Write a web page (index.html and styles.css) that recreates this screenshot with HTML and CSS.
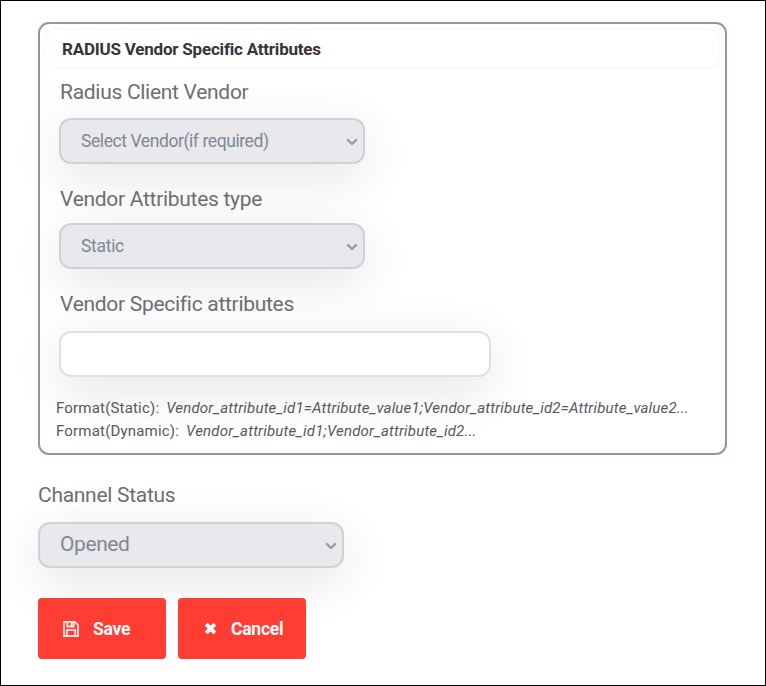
FILE: index.html
```html
<!DOCTYPE html>
<html lang="en">
<head>
<meta charset="utf-8">
<title>RADIUS Vendor Specific Attributes</title>
<link rel="stylesheet" href="styles.css">
</head>
<body>
<form class="page">
  <section class="panel">
    <h2 class="panel-title">RADIUS Vendor Specific Attributes</h2>
    <div class="field">
      <label class="label">Radius Client Vendor</label>
      <div class="control select small"><span class="vendor">Select Vendor(if required)</span>
        <svg class="chevron" viewBox="0 0 12 8"><path d="M1.2 1.4 6 6l4.8-4.6"/></svg></div>
    </div>
    <div class="field type">
      <label class="label">Vendor Attributes type</label>
      <div class="control select small"><span>Static</span>
        <svg class="chevron" viewBox="0 0 12 8"><path d="M1.2 1.4 6 6l4.8-4.6"/></svg></div>
    </div>
    <div class="field attrs">
      <label class="label" for="attributes">Vendor Specific attributes</label>
      <input class="control input" id="attributes" type="text">
    </div>
    <div class="formats">
      <p class="format"><span>Format(Static):</span><em>Vendor_attribute_id1=Attribute_value1;Vendor_attribute_id2=Attribute_value2...</em></p>
      <p class="format"><span>Format(Dynamic):</span><em>Vendor_attribute_id1;Vendor_attribute_id2...</em></p>
    </div>
  </section>
  <div class="status">
    <label class="label">Channel Status</label>
    <div class="control select large"><span>Opened</span>
      <svg class="chevron" viewBox="0 0 12 8"><path d="M1.2 1.4 6 6l4.8-4.6"/></svg></div>
  </div>
  <div class="actions">
    <button class="button save" type="button">
      <svg class="icon-save" viewBox="0 0 16 16"><path d="M1 1h11l3 3v11H1z"/><path d="M4.3 1v4.5h6.4V1M8.6 2v2.5M3.8 15V9.2h8.4V15"/></svg>
      <span>Save</span></button>
    <button class="button cancel" type="button">
      <svg class="icon-x" viewBox="0 0 12 12"><path d="M2 2l8 8M10 2l-8 8"/></svg>
      <span>Cancel</span></button>
  </div>
</form>
</body>
</html>
```
FILE: styles.css
```css
* { box-sizing: border-box; }
body { margin: 0; background: #fff; font-family: Roboto, "Liberation Sans", sans-serif; }
.page { height: 686px; border: 1px solid #000; padding: 21px 38px 0 37px; overflow: hidden; }
.panel { width: 689px; height: 433px; border: 2px solid #8d99a6; border-radius: 11px; padding: 4px; }
.panel-title { display: flex; align-items: center; height: 41px; margin: 0; padding: 0 16px; border: 2px solid #fafafa; border-radius: 12px; font-size: 17px; font-weight: 700; letter-spacing: -.21px; color: #3b3237; }
.field { padding: 0 0 0 15px; }
.label { display: flex; align-items: center; position: relative; z-index: 1; height: 24px; margin: 11px 0 14px 1px; font-size: 21px; letter-spacing: -.29px; color: #6d6e73; white-space: nowrap; }
.type .label { margin-top: 23px; margin-bottom: 12px; }
.attrs .label { margin-top: 23px; margin-bottom: 15px; }
.control { display: flex; align-items: center; width: 306px; height: 46px; border: 2px solid #cdd2d8; border-radius: 12px; box-shadow: 0 13px 50px rgba(0, 0, 0, .11); }
.select { justify-content: space-between; padding: 0 5px 0 20px; background: #e8e8ed; color: #7d8895; white-space: nowrap; }
.small { font-size: 17.5px; letter-spacing: -.3px; }
.vendor { letter-spacing: -.42px; }
.large { font-size: 21px; letter-spacing: -.4px; }
.large span { margin-bottom: 3px; }
.input { width: 432px; background: #fff; border-color: #dde0e4; padding: 0 20px; }
.chevron { width: 12px; height: 8px; margin-top: 1px; fill: none; stroke: #929da8; stroke-width: 2.3; }
.formats { position: relative; padding: 19px 0 0 12px; }
.format { display: flex; align-items: center; gap: 7px; height: 23px; margin: 0; font-size: 15px; letter-spacing: .19px; color: #57585c; white-space: nowrap; }
.status .label { margin: 28px 0 15px; }
.actions { display: flex; gap: 12px; margin-top: 30px; }
.button { display: flex; align-items: center; height: 61px; width: 128px; border: 0; border-radius: 4px; background: #ff3d33; color: #fff; font: 700 17.5px Roboto, sans-serif; letter-spacing: -.25px; position: relative; }
.save { padding: 0 0 0 25px; }
.cancel { padding: 0 0 0 26px; }
.icon-save { width: 16px; height: 16px; margin-right: 14px; fill: none; stroke: #ffe4e2; stroke-width: 1.8; }
.icon-x { width: 13px; height: 13px; margin-right: 14px; fill: none; stroke: #fff; stroke-width: 3.7; }
```
